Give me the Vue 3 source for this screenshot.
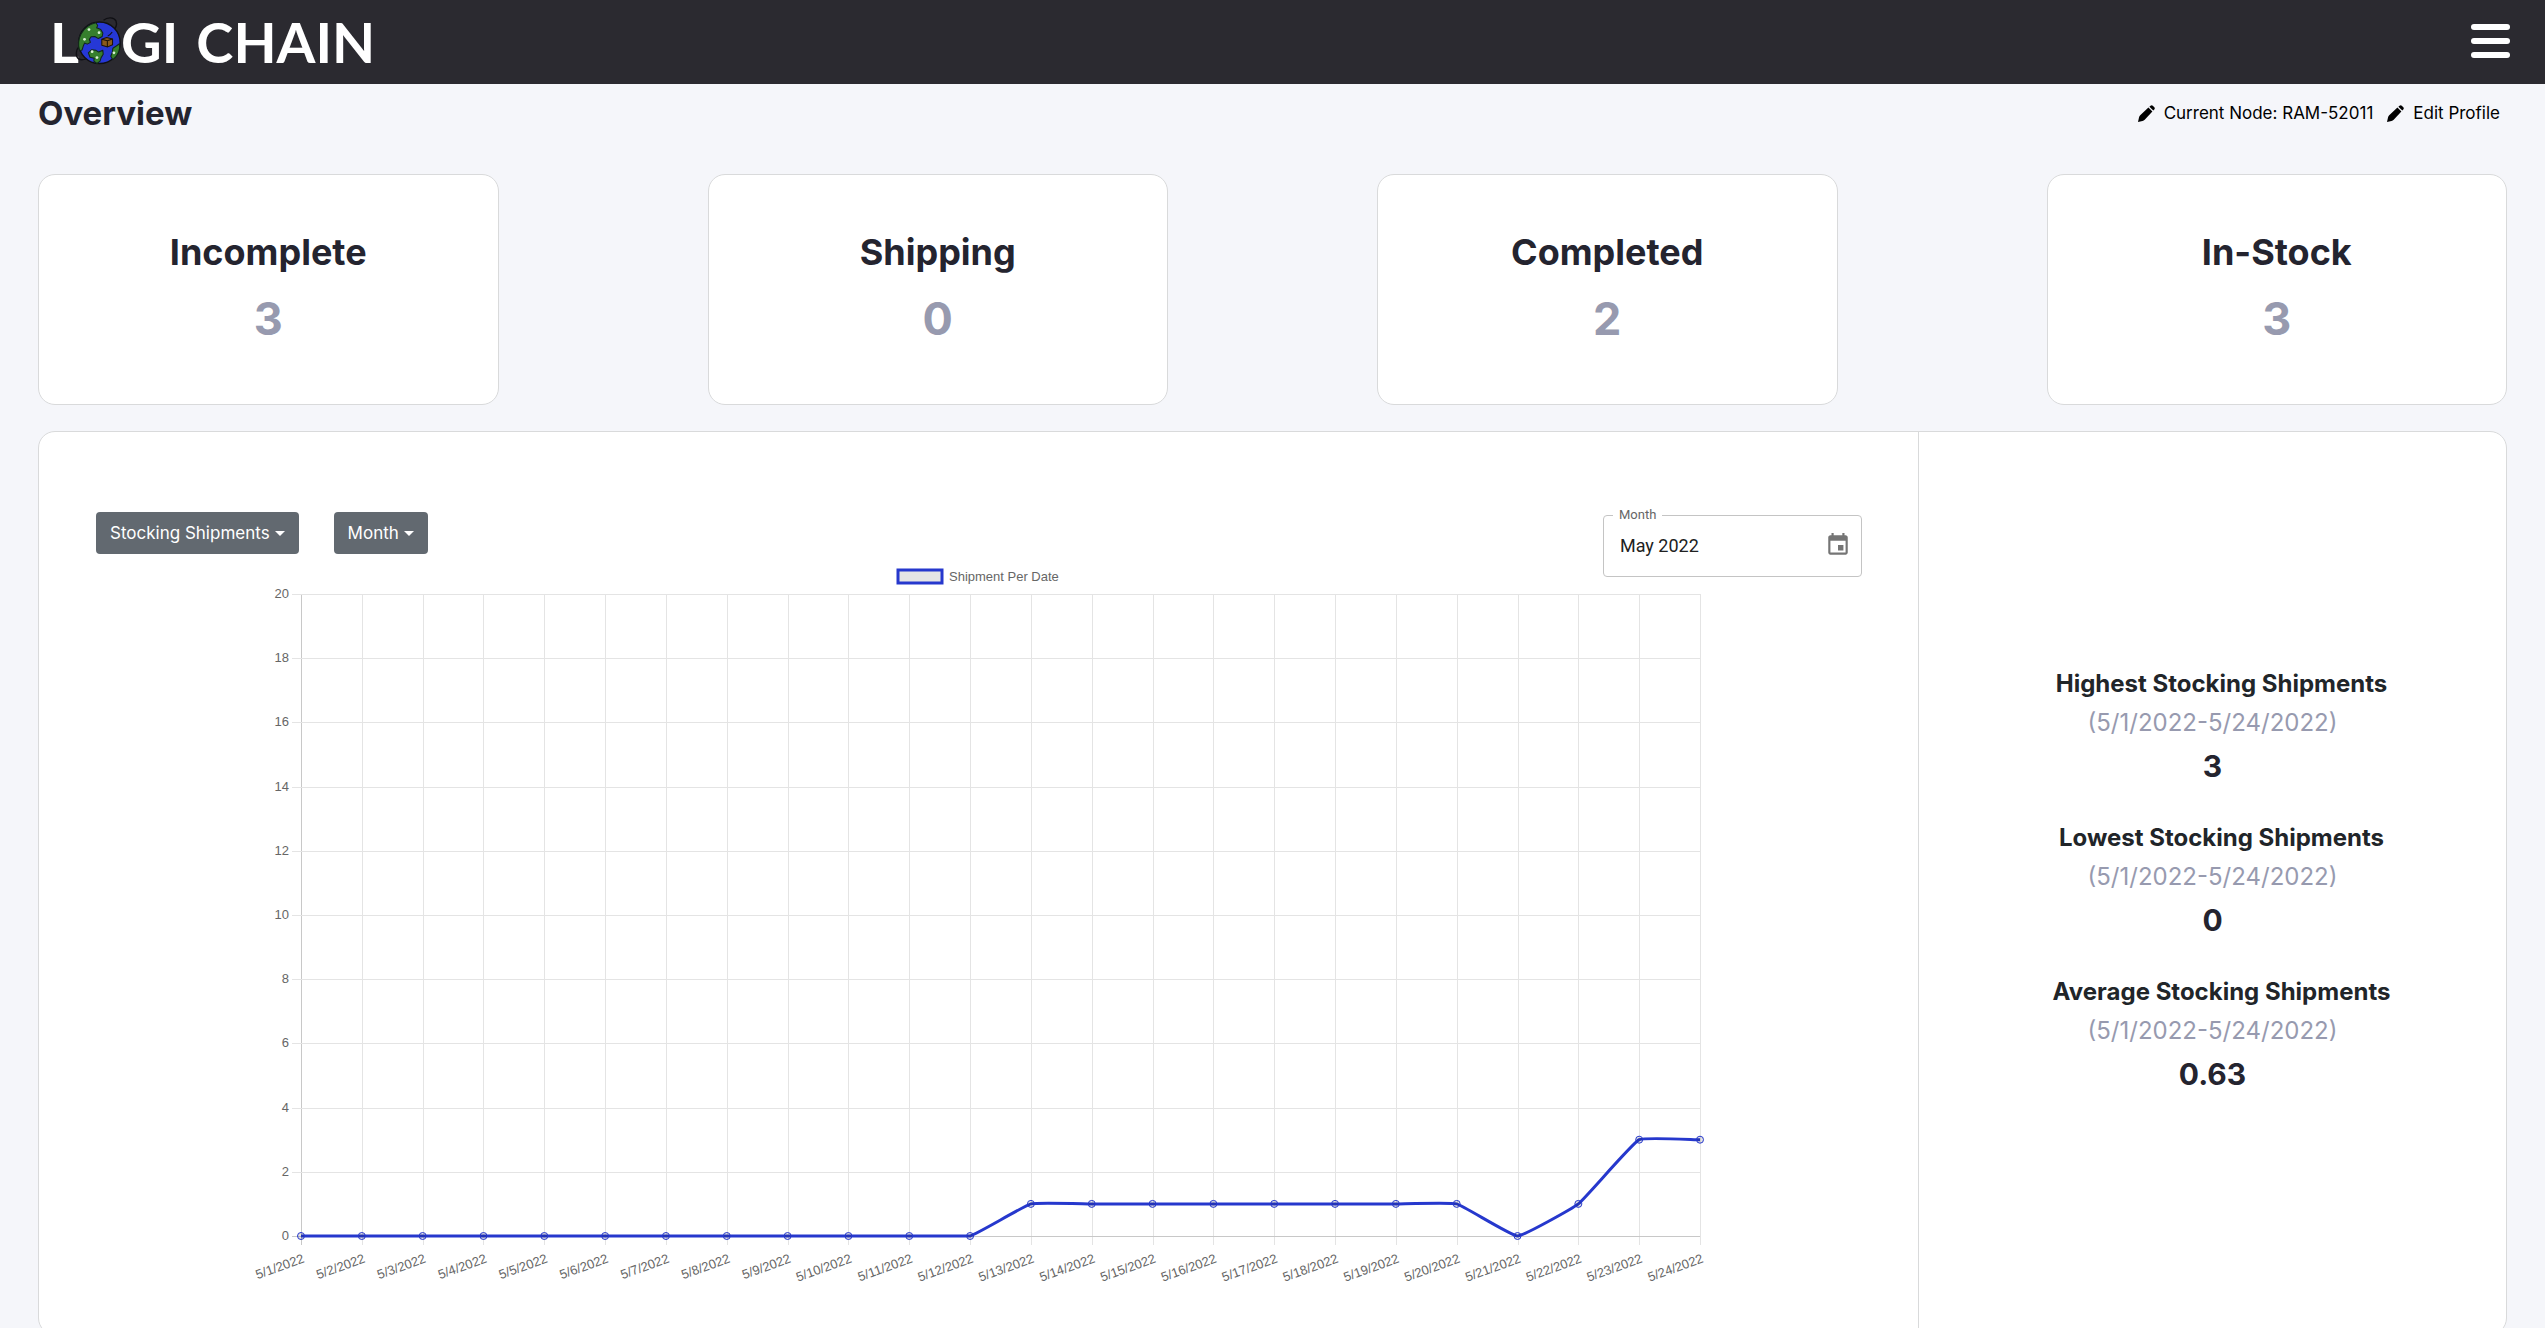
<script setup>
const stats = [
  { label: 'Incomplete', value: '3' },
  { label: 'Shipping', value: '0' },
  { label: 'Completed', value: '2' },
  { label: 'In-Stock', value: '3' },
]

const summary = [
  { label: 'Highest Stocking Shipments', value: '3' },
  { label: 'Lowest Stocking Shipments', value: '0' },
  { label: 'Average Stocking Shipments', value: '0.63' },
]
const range = '(5/1/2022-5/24/2022)'

const values = [0, 0, 0, 0, 0, 0, 0, 0, 0, 0, 0, 0, 1, 1, 1, 1, 1, 1, 1, 1, 0, 1, 3, 3]

const plot = { left: 50, right: 1449, top: 37, bottom: 679 }
const maxValue = 20
const tension = 0.1

const xAt = (i) => plot.left + ((plot.right - plot.left) * i) / (values.length - 1)
const yAt = (v) => plot.bottom - ((plot.bottom - plot.top) * v) / maxValue

const points = values.map((v, i) => ({ x: xAt(i), y: yAt(v), label: `5/${i + 1}/2022` }))
const rows = Array.from({ length: 11 }, (_, i) => ({ label: String(i * 2), y: Math.round(yAt(i * 2)) }))

// Control points of a smoothed line: each one leans along its neighbours' chord,
// and none may leave the plot area.
const clampY = (y) => Math.min(plot.bottom, Math.max(plot.top, y))

function controls(i) {
  const p = points[i]
  const a = points[i - 1] || p
  const b = points[i + 1] || p
  const before = Math.hypot(p.x - a.x, p.y - a.y)
  const after = Math.hypot(b.x - p.x, b.y - p.y)
  const ka = (tension * before) / (before + after)
  const kb = (tension * after) / (before + after)
  return {
    inX: p.x - ka * (b.x - a.x),
    inY: clampY(p.y - ka * (b.y - a.y)),
    outX: p.x + kb * (b.x - a.x),
    outY: clampY(p.y + kb * (b.y - a.y)),
  }
}

const linePath = points
  .map((p, i) => {
    if (i === 0) return `M${p.x} ${p.y}`
    const from = controls(i - 1)
    const to = controls(i)
    return `C${from.outX} ${from.outY} ${to.inX} ${to.inY} ${p.x} ${p.y}`
  })
  .join('')

const pencil =
  'M0 17L1 12.500Q1.300 11.200 2.200 10.300L10.400 2.600L14.400 6.600L6.700 14.800Q5.800 15.700 4.500 16ZM11.400 1.700L12.500 .7Q13.700 -.3 14.800 .7L16.300 2.200Q17.300 3.300 16.300 4.500L15.300 5.600Z'
</script>

<template>
  <div class="page">
    <header class="topbar">
      <a class="brand" href="#" aria-label="Logi Chain">
        <span>L</span>
        <svg class="globe" viewBox="0 0 156 156" aria-hidden="true">
          <g fill="none" stroke="#101014" stroke-width="4">
            <path d="M94 18C106 8 124 9 130 20c4 11-3 24-11 32" />
            <path d="M24 93C14 103 12 122 22 130c9 4 24 0 36-8" />
          </g>
          <circle cx="82" cy="83" r="60" fill="#2638d6" stroke="#101014" stroke-width="4" />
          <g fill="#367f2d" stroke="#12251a" stroke-width="3" stroke-linejoin="round">
            <path d="M72 25l5 8-3 7 12 5 6 10-2 10-11 6-10-6-11 1-5 7 3 9-9 5-8-3-4 10-3 10-7 2C15 75 30 35 72 25z" />
            <path d="M50 112l10-9 12 2 8 5 12-5 1 11-6 10-3 10-9 7-9-7 1-8-12-3z" />
            <path d="M140 86c3 19-6 36-19 46l-6-10 4-10 2-13 12-8z" />
          </g>
          <path d="M119 52c-3 5-8 9-13 12" fill="none" stroke="#101014" stroke-width="3" />
          <g fill="#d9f2d4">
            <circle cx="52" cy="45" r="4" /><circle cx="81" cy="54" r="4" />
            <circle cx="39" cy="73" r="4" /><circle cx="61" cy="109" r="4" />
            <circle cx="75" cy="126" r="4" /><circle cx="124" cy="112" r="4" />
          </g>
          <g fill="#8a5a1c" stroke="#1b1208" stroke-width="3" stroke-linejoin="round">
            <path d="M89 73l14-5 17 4v17l-14 6-17-5z" />
            <path d="M89 73l16 4 15-5M105 77v18" />
          </g>
        </svg>
        <span>GI</span>
        <span class="brand-second">CHAIN</span>
      </a>
      <button class="menu" type="button" aria-label="Open menu"><i></i><i></i><i></i></button>
    </header>

    <main class="content">
      <div class="heading">
        <h1>Overview</h1>
        <nav class="links">
          <a href="#">
            <svg viewBox="0 0 17 17" aria-hidden="true"><path :d="pencil" /></svg>
            Current Node: RAM-52011
          </a>
          <a href="#">
            <svg viewBox="0 0 17 17" aria-hidden="true"><path :d="pencil" /></svg>
            Edit Profile
          </a>
        </nav>
      </div>

      <section class="cards">
        <article v-for="s in stats" :key="s.label" class="card">
          <h2>{{ s.label }}</h2>
          <p>{{ s.value }}</p>
        </article>
      </section>

      <section class="panel">
        <div class="chart-side">
          <div class="toolbar">
            <button class="dropdown" type="button">Stocking Shipments</button>
            <button class="dropdown" type="button">Month</button>
            <fieldset class="month-field">
              <legend><label for="month">Month</label></legend>
              <input id="month" type="text" value="May 2022" />
              <button type="button" aria-label="Choose month">
                <svg viewBox="0 0 24 24" aria-hidden="true">
                  <path d="M17 12h-5v5h5v-5zM16 1v2H8V1H6v2H5c-1.110 0-2 .9-2 2v14c0 1.100.89 2 2 2h14c1.100 0 2-.9 2-2V5c0-1.100-.9-2-2-2h-1V1h-2zm3 18H5V8h14v11z" />
                </svg>
              </button>
            </fieldset>
          </div>

          <svg class="chart" viewBox="0 0 1455 727" role="img" aria-label="Shipment Per Date">
            <rect class="key" x="647" y="13" width="44" height="13" />
            <text x="698" y="24">Shipment Per Date</text>

            <g class="grid">
              <line v-for="(p, i) in points" :key="p.label" :class="{ axis: i === 0 }"
                :x1="Math.round(p.x)" :x2="Math.round(p.x)" :y1="plot.top" :y2="plot.bottom + 9" />
              <line v-for="(r, i) in rows" :key="r.label" :class="{ axis: i === 0 }"
                :x1="plot.left - 9" :x2="plot.right" :y1="r.y" :y2="r.y" />
            </g>

            <text v-for="r in rows" :key="r.label" x="38" :y="r.y + 4" text-anchor="end">{{ r.label }}</text>
            <text v-for="p in points" :key="p.label" text-anchor="end"
              :transform="`translate(${p.x + 4} ${plot.bottom + 26}) rotate(-20)`">{{ p.label }}</text>

            <path class="line" :d="linePath" />
            <circle v-for="p in points" :key="p.label" class="dot" :cx="p.x" :cy="p.y" r="3.5" />
          </svg>
        </div>

        <aside class="summary">
          <div v-for="s in summary" :key="s.label" class="summary-item">
            <h3>{{ s.label }}</h3>
            <p class="range">{{ range }}</p>
            <p class="amount">{{ s.value }}</p>
          </div>
        </aside>
      </section>
    </main>
  </div>
</template>

<style>
body {
  margin: 0;
  background: #f5f6fa;
}
</style>

<style scoped>
* {
  box-sizing: border-box;
}

.page {
  font-family: Inter, "Liberation Sans", sans-serif;
  color: #24242f;
}

h1, h2, h3, p {
  margin: 0;
  font-weight: 700;
}

button, input {
  font-family: inherit;
}

.topbar {
  display: flex;
  align-items: center;
  justify-content: space-between;
  height: 84px;
  padding: 0 35px 0 50px;
  background: #2b2a30;
}

.brand {
  display: flex;
  align-items: center;
  font: 700 56px/84px Lato, sans-serif;
  color: #fff;
  text-decoration: none;
}

.globe {
  width: 54px;
  height: 54px;
  margin: 0 -4px 2px -8px;
}

.brand-second {
  margin-left: 18px;
}

.menu {
  display: grid;
  gap: 8px;
  width: 39px;
  margin-bottom: 2px;
  padding: 0;
  border: 0;
  background: none;
}

.menu i {
  height: 6px;
  border-radius: 3px;
  background: #fff;
}

.content {
  padding: 0 38px;
}

.heading {
  display: flex;
  align-items: center;
  justify-content: space-between;
  height: 58px;
  margin-bottom: 32px;
}

h1 {
  font-size: 33px;
  line-height: 58px;
}

.links {
  display: flex;
  gap: 14px;
  padding-right: 7px;
}

.links a {
  display: flex;
  align-items: center;
  gap: 9px;
  font-size: 17px;
  line-height: 24px;
  color: #000;
  text-decoration: none;
}

.links svg {
  width: 17px;
  height: 17px;
}

.cards {
  display: grid;
  grid-template-columns: repeat(4, 1fr);
  gap: 209px;
  margin-bottom: 26px;
}

.card {
  padding: 48px 16px;
  border: 1px solid #d9dadb;
  border-radius: 17px;
  background: #fff;
  text-align: center;
}

.card h2 {
  font-size: 36px;
  line-height: 58px;
}

.card p {
  font-size: 45px;
  line-height: 75px;
  color: #979aaf;
}

.panel {
  display: grid;
  grid-template-columns: 1880fr 587fr;
  border: 1px solid #d9dadb;
  border-radius: 17px;
  background: #fff;
}

.chart-side {
  padding: 80px 0 50px;
  border-right: 1px solid #d9dadb;
}

.toolbar {
  display: flex;
  align-items: flex-start;
  gap: 35px;
  height: 65px;
  padding: 0 56px 0 57px;
}

.dropdown {
  display: flex;
  align-items: center;
  gap: 5px;
  height: 42px;
  padding: 0 14px;
  border: 0;
  border-radius: 4px;
  background: #626970;
  color: #fff;
  font-size: 17px;
}

.dropdown::after {
  content: "";
  border: 5px solid transparent;
  border-top-color: #fff;
  border-bottom: 0;
}

.month-field {
  display: flex;
  width: 259px;
  min-width: 0;
  height: 70px;
  margin: -5px 0 0 auto;
  padding: 0 10px 0 16px;
  border: 1px solid #c4c4c4;
  border-radius: 4px;
  font-family: Roboto, sans-serif;
}

.month-field legend {
  margin-left: -7px;
  padding: 0 6px;
  font-size: 13px;
  line-height: 16px;
  color: #666;
}

.month-field input {
  flex: 1;
  width: 100%;
  min-width: 0;
  height: 44px;
  padding: 0;
  border: 0;
  outline: 0;
  background: none;
  font-size: 18px;
  color: #212121;
}

.month-field button {
  height: 44px;
  padding: 0;
  border: 0;
  background: none;
}

.month-field svg {
  display: block;
  width: 26px;
  height: 26px;
  fill: #757575;
}

.chart {
  display: block;
  width: calc(100% - 424px);
  margin: -20px auto 0;
  overflow: visible;
  font-family: "Liberation Sans", Arial, sans-serif;
  font-size: 13px;
}

.chart text {
  fill: #666;
}

.grid line {
  stroke: #e4e4e4;
  shape-rendering: crispEdges;
}

.grid .axis {
  stroke: #c8c8c8;
}

.key {
  fill: #e5e5e5;
  stroke: #2638cd;
  stroke-width: 3px;
}

.line {
  fill: none;
  stroke: #2638cd;
  stroke-width: 3px;
}

.dot {
  fill: rgba(0, 0, 0, 0.1);
  stroke: #2638cd;
}

.summary {
  display: flex;
  flex-direction: column;
  justify-content: center;
  gap: 30px;
  padding-bottom: 4px;
  text-align: center;
}

.summary h3 {
  padding-left: 18px;
  font-size: 24px;
  line-height: 38px;
  color: #212529;
}

.range {
  font-size: 24px;
  font-weight: 400;
  line-height: 40px;
  color: #979aaf;
}

.amount {
  font-size: 30px;
  line-height: 46px;
}
</style>
